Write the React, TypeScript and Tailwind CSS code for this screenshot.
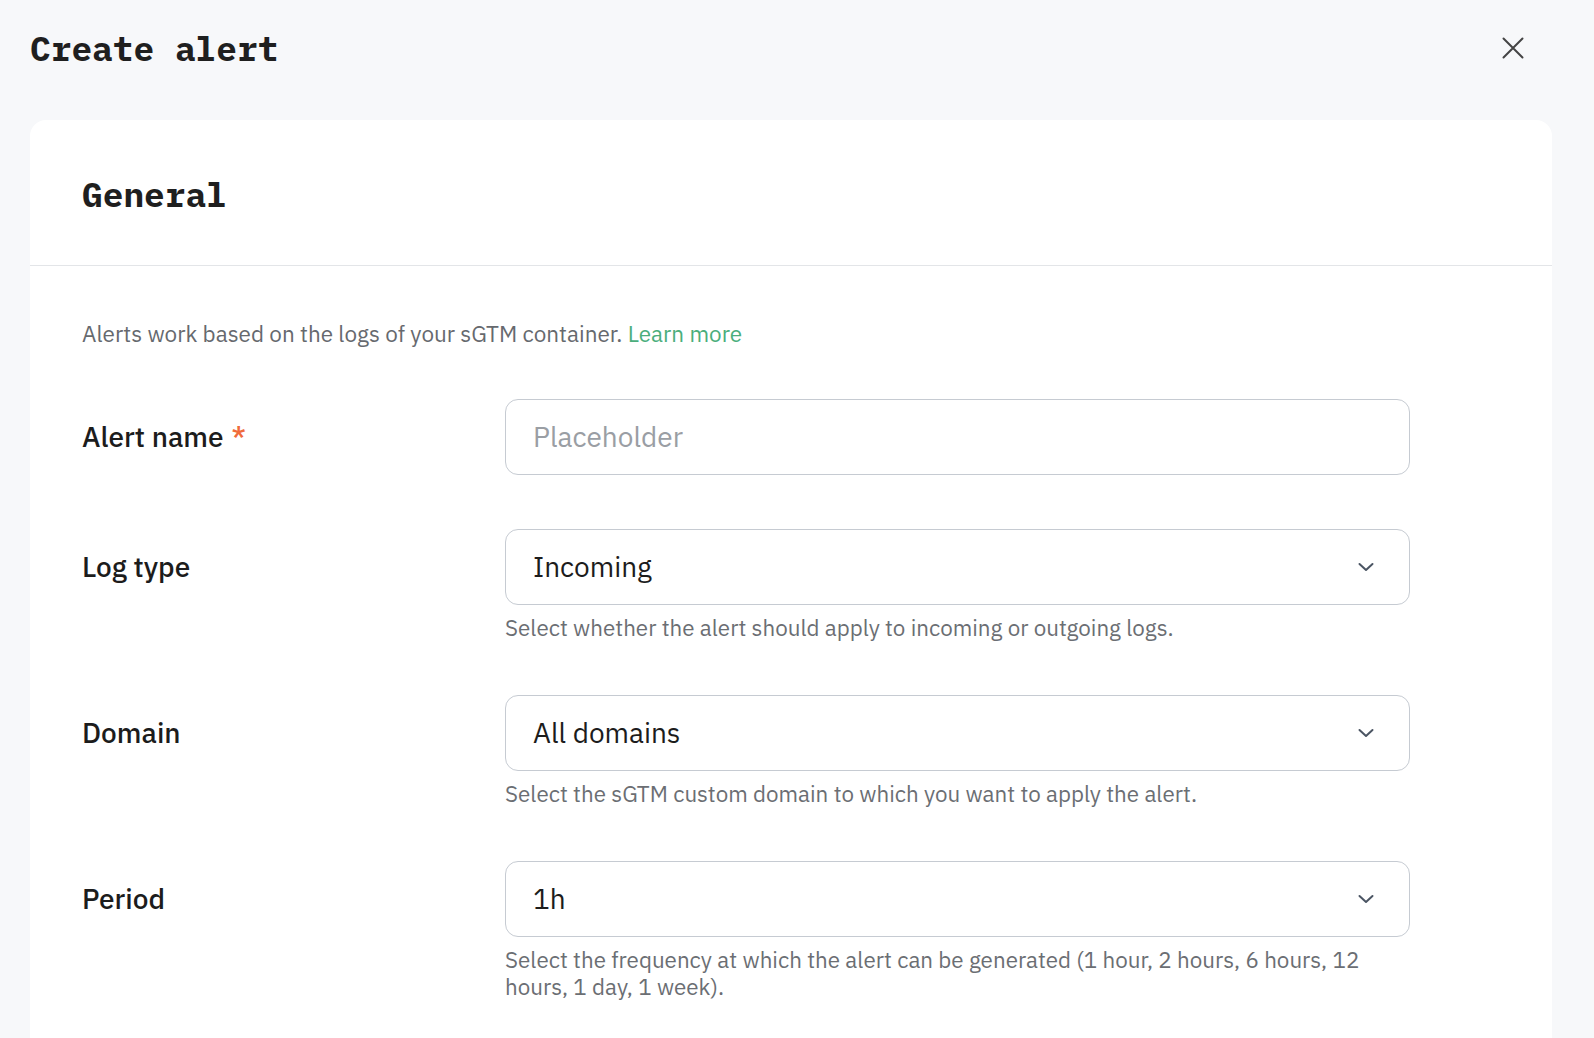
import React from "react";

const sans = "font-['IBM_Plex_Sans','Roboto',sans-serif]";
const mono = "font-['IBM_Plex_Mono','DejaVu_Sans_Mono',monospace]";

const Chevron = () => (
  <svg width="20" height="20" viewBox="0 0 20 20" fill="none" stroke="#4b5563" strokeWidth="2" strokeLinecap="round" strokeLinejoin="round">
    <path d="M3.5 7 L10 13 L16.5 7" />
  </svg>
);

const Field = ({
  label,
  required,
  value,
  placeholder,
  select,
  help,
}: {
  label: string;
  required?: boolean;
  value?: string;
  placeholder?: string;
  select?: boolean;
  help?: string;
}) => (
  <div className="flex">
    <div className="w-[423px] h-[76px] flex items-center text-[28px] font-medium text-[#1c1c1c]">
      {label}
      {required && <span className="ml-2 text-[#f06b3b]">*</span>}
    </div>
    <div className="w-[905px]">
      <div className="h-[76px] rounded-[13px] border border-[#c6cbd2] flex items-center justify-between pl-[27px] pr-[33px] text-[28px]">
        {value ? (
          <span className="text-[#1c1c1c]">{value}</span>
        ) : (
          <span className="text-[#9a9ea4]">{placeholder}</span>
        )}
        {select && <Chevron />}
      </div>
      {help && <p className="mt-[9px] text-[22.4px] leading-[27px] text-[#6b6e73]">{help}</p>}
    </div>
  </div>
);

export default function App() {
  return (
    <div className={`min-h-screen bg-[#f7f8fa] ${sans}`}>
      <div className="flex items-center justify-between pl-[30px] pr-[70px] pt-[26px]">
        <h1 className={`${mono} text-[34.5px] leading-[44px] font-bold text-[#1f1f1f]`}>Create alert</h1>
        <svg width="22" height="22" viewBox="0 0 22 22" stroke="#444" strokeWidth="2" strokeLinecap="round">
          <path d="M1.5 1.5 L20.5 20.5 M20.5 1.5 L1.5 20.5" />
        </svg>
      </div>
      <div className="ml-[30px] mt-[50px] w-[1522px] bg-white rounded-t-2xl">
        <div className="h-[146px] flex items-center pl-[52px] pt-1 border-b border-[#e3e5e8]">
          <h2 className={`${mono} text-[34.5px] font-bold text-[#1f1f1f]`}>General</h2>
        </div>
        <div className="pl-[52px] pt-[54px] pb-10">
          <p className="text-[22.5px] leading-7 text-[#66696e]">
            Alerts work based on the logs of your sGTM container.{" "}
            <a className="text-[#4bae7c]">Learn more</a>
          </p>
          <div className="mt-[51px] flex flex-col gap-[54px]">
            <Field label="Alert name" required placeholder="Placeholder" />
            <Field
              label="Log type"
              value="Incoming"
              select
              help="Select whether the alert should apply to incoming or outgoing logs."
            />
            <Field
              label="Domain"
              value="All domains"
              select
              help="Select the sGTM custom domain to which you want to apply the alert."
            />
            <Field
              label="Period"
              value="1h"
              select
              help="Select the frequency at which the alert can be generated (1 hour, 2 hours, 6 hours, 12 hours, 1 day, 1 week)."
            />
          </div>
        </div>
      </div>
    </div>
  );
}
